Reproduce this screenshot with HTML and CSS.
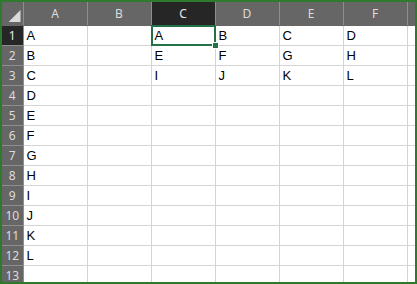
FILE: index.html
```html
<!DOCTYPE html>
<html lang="en">

<head>
  <meta charset="UTF-8">
  <meta name="viewport" content="width=device-width, initial-scale=1.0">
  <title>Sheet1</title>
  <link rel="stylesheet" href="styles.css">
</head>

<body>
  <div class="sheet">
    <table class="grid">
      <colgroup>
        <col class="col-rh">
        <col class="col-c"><col class="col-c"><col class="col-c">
        <col class="col-c"><col class="col-c"><col class="col-c">
        <col class="col-rest">
      </colgroup>
      <thead>
        <tr>
          <th class="corner"><span class="tri"></span></th>
          <th>A</th>
          <th>B</th>
          <th class="sel">C</th>
          <th>D</th>
          <th>E</th>
          <th>F</th>
          <th></th>
        </tr>
      </thead>
      <tbody>
        <tr><th class="sel">1</th><td>A</td><td></td><td class="active">A</td><td>B</td><td>C</td><td>D</td><td></td></tr>
        <tr><th>2</th><td>B</td><td></td><td>E</td><td>F</td><td>G</td><td>H</td><td></td></tr>
        <tr><th>3</th><td>C</td><td></td><td>I</td><td>J</td><td>K</td><td>L</td><td></td></tr>
        <tr><th>4</th><td>D</td><td></td><td></td><td></td><td></td><td></td><td></td></tr>
        <tr><th>5</th><td>E</td><td></td><td></td><td></td><td></td><td></td><td></td></tr>
        <tr><th>6</th><td>F</td><td></td><td></td><td></td><td></td><td></td><td></td></tr>
        <tr><th>7</th><td>G</td><td></td><td></td><td></td><td></td><td></td><td></td></tr>
        <tr><th>8</th><td>H</td><td></td><td></td><td></td><td></td><td></td><td></td></tr>
        <tr><th>9</th><td>I</td><td></td><td></td><td></td><td></td><td></td><td></td></tr>
        <tr><th>10</th><td>J</td><td></td><td></td><td></td><td></td><td></td><td></td></tr>
        <tr><th>11</th><td>K</td><td></td><td></td><td></td><td></td><td></td><td></td></tr>
        <tr><th>12</th><td>L</td><td></td><td></td><td></td><td></td><td></td><td></td></tr>
        <tr><th>13</th><td></td><td></td><td></td><td></td><td></td><td></td><td></td></tr>
      </tbody>
    </table>
  </div>
</body>

</html>
```

FILE: styles.css
```css
body {
  margin: 0;
  background-color: #fff;
}

.sheet {
  width: 417px;
  height: 284px;
  box-sizing: border-box;
  border: 2px solid #2d7a2d;
  overflow: hidden;
  background-color: #fff;
}

.grid {
  width: 413px;
  table-layout: fixed;
  border-collapse: collapse;
  font-family: "Liberation Sans", Arial, sans-serif;
  font-size: 13px;
  color: #000;
}

.col-rh {
  width: 21px;
}

.col-c {
  width: 64px;
}

.col-rest {
  width: 8px;
}

thead th {
  height: 23px;
  padding: 0;
  background-color: #666;
  color: #dcdcdc;
  font-family: "Noto Sans", "Open Sans", sans-serif;
  font-weight: normal;
  font-size: 12px;
  text-align: center;
  border-right: 1px solid #8e8e8e;
  border-bottom: 1px solid #666;
}

tbody th {
  height: 19px;
  padding: 0;
  background-color: #666;
  color: #dcdcdc;
  font-family: "Noto Sans", "Open Sans", sans-serif;
  font-weight: normal;
  font-size: 12px;
  text-align: center;
  border-bottom: 1px solid #8e8e8e;
  border-right: 1px solid #8e8e8e;
}

th.sel {
  background-color: #262626;
  color: #e6e6e6;
}

.corner {
  vertical-align: bottom;
}

.tri {
  display: block;
  width: 12px;
  height: 12px;
  margin: 0 2px 3px auto;
  background-color: #dadada;
  clip-path: polygon(100% 0, 100% 100%, 0 100%);
}

td {
  height: 19px;
  padding: 0 3px;
  border: 1px solid #d4d4d4;
  vertical-align: middle;
  white-space: nowrap;
  overflow: hidden;
}

td.active {
  position: relative;
  overflow: visible;
}

/* selection frame and fill handle sit over the grid lines */
td.active::before {
  content: "";
  position: absolute;
  left: -1px;
  top: -1px;
  right: -1px;
  bottom: -1px;
  border: 2px solid #217346;
}

td.active::after {
  content: "";
  position: absolute;
  right: -4px;
  bottom: -4px;
  width: 5px;
  height: 5px;
  background-color: #217346;
  border: 1px solid #fff;
}
```
